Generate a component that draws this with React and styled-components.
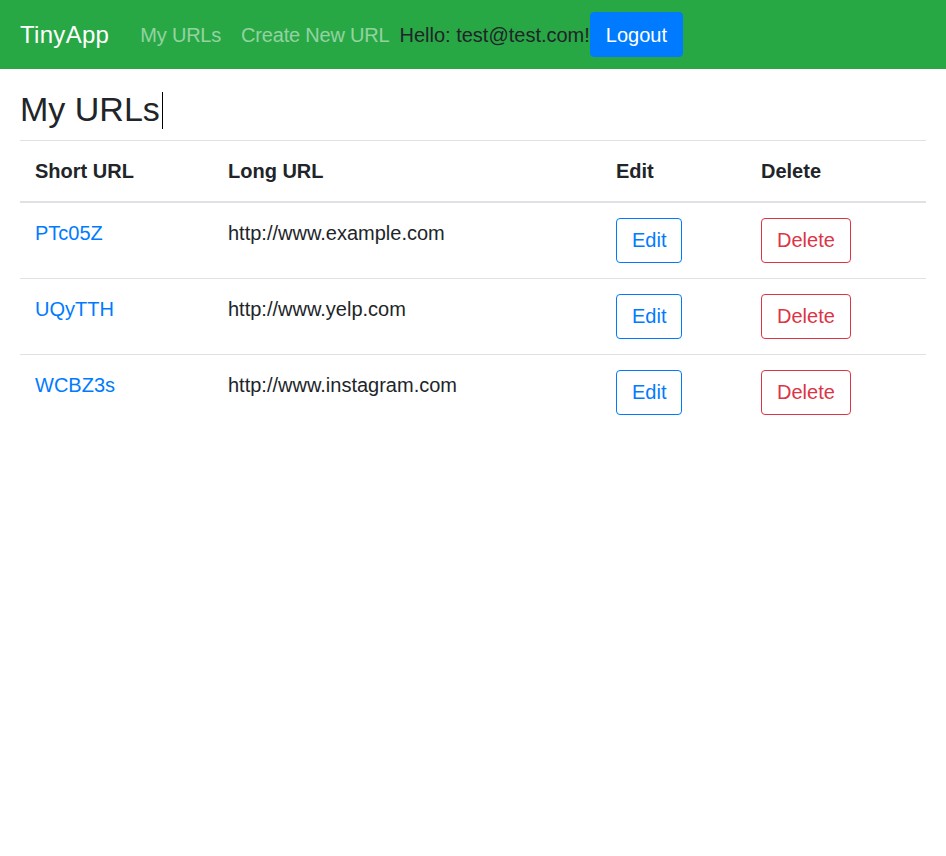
import styled, { createGlobalStyle } from "styled-components";

const GlobalStyle = createGlobalStyle`
  * { box-sizing: border-box; }
  body {
    margin: 0;
    font-family: "Liberation Sans", Arial, sans-serif;
    font-size: 20px;
    line-height: 1.5;
    color: #212529;
    background: #fff;
  }
`;

const urls = [
  { id: "PTc05Z", longURL: "http://www.example.com" },
  { id: "UQyTTH", longURL: "http://www.yelp.com" },
  { id: "WCBZ3s", longURL: "http://www.instagram.com" }
];

const columns = [
  { label: "Short URL", width: 193 },
  { label: "Long URL", width: 388 },
  { label: "Edit", width: 145 },
  { label: "Delete", width: 180 }
];

const App = () => {
  return (
    <>
      <GlobalStyle />
      <Navbar>
        <Brand href="#">TinyApp</Brand>
        <NavLink href="#">My URLs</NavLink>
        <NavLink href="#">Create New URL</NavLink>
        <Greeting>Hello: test@test.com!</Greeting>
        <Button $variant="primary">Logout</Button>
      </Navbar>
      <Main>
        <Title>
          My URLs
          <Caret />
        </Title>
        <Table>
          <colgroup>
            {columns.map((col) => (
              <col key={col.label} style={{ width: col.width }} />
            ))}
          </colgroup>
          <thead>
            <tr>
              {columns.map((col) => (
                <Th key={col.label}>{col.label}</Th>
              ))}
            </tr>
          </thead>
          <tbody>
            {urls.map((url) => (
              <tr key={url.id}>
                <Td>
                  <ShortLink href="#">{url.id}</ShortLink>
                </Td>
                <Td>{url.longURL}</Td>
                <Td>
                  <Button $variant="outlineBlue">Edit</Button>
                </Td>
                <Td>
                  <Button $variant="outlineRed">Delete</Button>
                </Td>
              </tr>
            ))}
          </tbody>
        </Table>
      </Main>
    </>
  );
};

const Navbar = styled.nav`
  display: flex;
  align-items: center;
  height: 69px;
  padding: 0 20px;
  background: #28a745;
`;

const Brand = styled.a`
  font-size: 24px;
  line-height: 36px;
  color: #fff;
  text-decoration: none;
  margin-right: 21px;
  letter-spacing: 0.3px;
`;

const NavLink = styled.a`
  padding: 0 10px;
  color: rgba(255, 255, 255, 0.5);
  text-decoration: none;
  letter-spacing: -0.2px;
`;

const Greeting = styled.span`
  color: #212529;
`;

const variants = {
  primary: { color: "#fff", bg: "#007bff", border: "#007bff" },
  outlineBlue: { color: "#007bff", bg: "transparent", border: "#007bff" },
  outlineRed: { color: "#dc3545", bg: "transparent", border: "#dc3545" }
};

const Button = styled.button`
  display: inline-block;
  font-family: inherit;
  font-size: 20px;
  line-height: 30px;
  padding: 6.5px 15px;
  color: ${(p) => variants[p.$variant].color};
  background: ${(p) => variants[p.$variant].bg};
  border: 1px solid ${(p) => variants[p.$variant].border};
  border-radius: 4px;
  cursor: pointer;
`;

const Main = styled.main`
  padding: 20px 20px 0;
`;

const Title = styled.h1`
  margin: 0 0 10px;
  font-size: 34px;
  font-weight: 500;
  line-height: 1.2;
`;

const Caret = styled.span`
  display: inline-block;
  width: 1px;
  height: 37px;
  margin-left: 2px;
  background: #000;
  vertical-align: -8px;
`;

const Table = styled.table`
  width: 906px;
  table-layout: fixed;
  border-collapse: collapse;
`;

const Th = styled.th`
  padding: 15px;
  text-align: left;
  font-weight: bold;
  border-top: 1px solid #dee2e6;
  border-bottom: 2px solid #dee2e6;
`;

const Td = styled.td`
  padding: 15px;
  vertical-align: top;
  border-top: 1px solid #dee2e6;
`;

const ShortLink = styled.a`
  color: #007bff;
  text-decoration: none;
`;

export default App;
